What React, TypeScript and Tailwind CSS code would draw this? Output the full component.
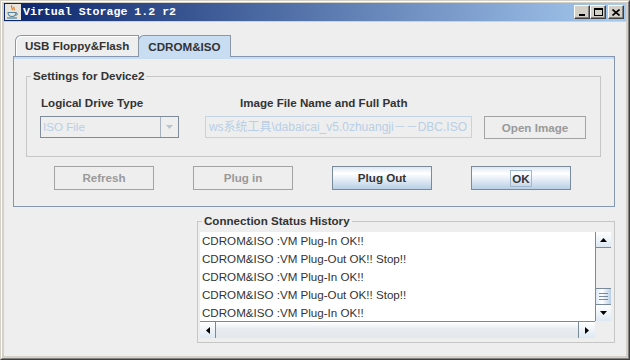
import React from 'react';

type Dir = 'up' | 'down' | 'left' | 'right';

const Arrow = ({ dir, color = '#000000' }: { dir: Dir; color?: string }) => {
  const vertical = dir === 'up' || dir === 'down';
  const w = vertical ? 7 : 4;
  const h = vertical ? 4 : 7;
  const pts = {
    up: '0,4 3.5,0 7,4',
    down: '0,0 7,0 3.5,4',
    left: '4,0 4,7 0,3.5',
    right: '0,0 0,7 4,3.5',
  }[dir];
  return (
    <svg width={w} height={h} viewBox={`0 0 ${w} ${h}`}>
      <polygon points={pts} fill={color} />
    </svg>
  );
};

const CaptionButton = ({ children }: { children: React.ReactNode }) => (
  <div className="w-[16px] h-[14px] bg-[#d4d0c8] border border-t-white border-l-white border-r-[#404040] border-b-[#404040] shadow-[inset_-1px_-1px_#808080] flex items-center justify-center">
    {children}
  </div>
);

const JavaIcon = () => (
  <svg width="16" height="16" viewBox="0 0 16 16">
    <rect x="0" y="0" width="16" height="16" fill="#e8e4dc" />
    <path d="M7 1.5c-2 1.6 1.6 2.6 0 4.6M9.2 3c-1.4 1.2 1 1.8-0.2 3.4" stroke="#e76f00" strokeWidth="1.1" fill="none" />
    <path d="M3 8.5h8c0 2.6-1.6 4-4 4s-4-1.4-4-4z" fill="none" stroke="#5382a1" strokeWidth="1.1" />
    <path d="M11 9.2c1.8-0.4 2 1.6 0 2.2" stroke="#5382a1" strokeWidth="1" fill="none" />
    <path d="M2 14h10" stroke="#5382a1" strokeWidth="1.2" />
  </svg>
);

const Button = ({ label, disabled, focused }: { label: string; disabled?: boolean; focused?: boolean }) => (
  <div
    className={
      disabled
        ? 'w-[100px] h-[24px] border border-[#a3a3a3] bg-[#eeeeee] flex items-center justify-center font-bold text-[#999999]'
        : 'w-[100px] h-[24px] border border-[#7a8a99] bg-[linear-gradient(to_bottom,#dde8f3_0%,#ffffff_30%,#b8cfe5_100%)] flex items-center justify-center font-bold text-[#333333]'
    }
  >
    <span className={focused ? 'border border-[#a3b8cc] px-[1px] leading-[15px]' : ''}>{label}</span>
  </div>
);

const VScrollBar = () => (
  <div className="w-[16px] h-full flex flex-col bg-[#eeeeee] border-l border-[#7a8a99]">
    <div className="h-[16px] border-b border-[#7a8a99] bg-[linear-gradient(to_bottom,#ffffff,#dde8f3)] flex items-center justify-center">
      <Arrow dir="up" />
    </div>
    <div className="flex-1 bg-[#eeeeee]" />
    <div className="h-[17px] border-y border-[#7a8a99] bg-[linear-gradient(to_right,#dde8f3,#ffffff_40%,#b8cfe5)] flex flex-col items-center justify-center gap-[2px]">
      <div className="w-[9px] h-px bg-[#7a8a99]" />
      <div className="w-[9px] h-px bg-[#7a8a99]" />
      <div className="w-[9px] h-px bg-[#7a8a99]" />
    </div>
    <div className="h-[16px] bg-[linear-gradient(to_bottom,#ffffff,#dde8f3)] flex items-center justify-center">
      <Arrow dir="down" />
    </div>
  </div>
);

const HScrollBar = () => (
  <div className="flex-1 h-full flex bg-[#eeeeee] border-t border-[#7a8a99]">
    <div className="w-[16px] border-r border-[#7a8a99] bg-[linear-gradient(to_bottom,#ffffff,#dde8f3)] flex items-center justify-center">
      <Arrow dir="left" />
    </div>
    <div className="flex-1 border-r border-[#7a8a99] bg-[linear-gradient(to_bottom,#ffffff,#e9edf2_40%,#e4e8ec)]" />
    <div className="w-[16px] bg-[linear-gradient(to_bottom,#ffffff,#dde8f3)] flex items-center justify-center">
      <Arrow dir="right" />
    </div>
  </div>
);

const history = [
  'CDROM&ISO :VM Plug-In OK!!',
  'CDROM&ISO :VM Plug-Out OK!! Stop!!',
  'CDROM&ISO :VM Plug-In OK!!',
  'CDROM&ISO :VM Plug-Out OK!! Stop!!',
  'CDROM&ISO :VM Plug-In OK!!',
];

export default function App() {
  return (
    <div className="w-[630px] h-[360px] overflow-hidden bg-[#d4d0c8] border border-[#d4d0c8] border-r-[#404040] border-b-[#404040] font-['Liberation_Sans','Noto_Sans_CJK_SC',Arial,sans-serif] text-[11.6px] text-[#333333]">
      <div className="h-full flex flex-col border border-white border-r-[#808080] border-b-[#808080] px-[2px] pt-[1px] pb-[2px]">
        {/* title bar */}
        <div className="h-[18px] flex items-center bg-[linear-gradient(to_right,#0a246a,#a6caf0)]">
          <div className="ml-[1px]">
            <JavaIcon />
          </div>
          <span className="ml-[2px] font-['Liberation_Mono',monospace] font-bold text-[11.6px] text-white">
            Virtual Storage 1.2 r2
          </span>
          <div className="ml-auto flex items-center">
            <CaptionButton>
              <div className="w-[6px] h-[2px] bg-black mt-[6px] -ml-[1px]" />
            </CaptionButton>
            <CaptionButton>
              <div className="w-[9px] h-[8px] border border-black border-t-2" />
            </CaptionButton>
            <div className="ml-[2px] mr-[2px]">
              <CaptionButton>
                <svg width="8" height="7" viewBox="0 0 8 7">
                  <path d="M0.5 0.5l7 6M7.5 0.5l-7 6" stroke="#000" strokeWidth="1.6" />
                </svg>
              </CaptionButton>
            </div>
          </div>
        </div>

        {/* window content */}
        <div className="mt-[1px] flex-1 bg-[#eeeeee] pt-[13px] flex flex-col">
          {/* tabs */}
          <div className="ml-[11px] h-[21px] flex items-end">
            <div className="h-[21px] px-[9px] flex items-center font-bold bg-[#eeeeee] border border-b-0 border-[#8b97a4] rounded-tl-[6px] shadow-[inset_1px_1px_#ffffff]">
              USB Floppy&amp;Flash
            </div>
            <div className="relative z-10 -mb-px -ml-px h-[22px] px-[9px] flex items-center font-bold bg-[#c8ddf2] border border-b-0 border-[#8b97a4] rounded-tl-[6px]">
              CDROM&amp;ISO
            </div>
          </div>

          {/* tab panel */}
          <div className="ml-[9px] w-[602px] border border-[#8597b0] flex flex-col">
            <div className="h-[2px] bg-[#c8ddf2]" />
            <fieldset className="mt-[10px] ml-[12px] w-[575px] border border-[#c6c6c6] pb-[17px]">
              <legend className="ml-[4px] px-[2px] font-bold leading-[14px]">Settings for Device2</legend>
              <div className="mt-[13px] pl-[14px] flex font-bold leading-[14px]">
                <span className="w-[199px]">Logical Drive Type</span>
                <span>Image File Name and Full Path</span>
              </div>
              <div className="mt-[6px] pl-[13px] flex items-start">
                <div className="w-[139px] h-[22px] border border-[#7f8b98] bg-[#eeeeee] flex">
                  <div className="flex-1 flex items-center pl-[2px] text-[#b8cfe5]">ISO File</div>
                  <div className="w-[18px] border-l border-[#a8b4c0] flex items-center justify-center">
                    <Arrow dir="down" color="#b8c4d0" />
                  </div>
                </div>
                <div className="ml-[26px] w-[267px] h-[22px] border border-[#c4d4e4] bg-[#eeeeee] flex items-center justify-end overflow-hidden whitespace-nowrap pr-[4px] text-[12px] text-[#b8cfe5]">
                  ws系统工具\dabaicai_v5.0zhuangji－－DBC.ISO
                </div>
                <div className="ml-[12px] w-[102px] h-[23px] border border-[#a3a3a3] bg-[#eeeeee] flex items-center justify-center font-bold text-[#999999]">
                  Open Image
                </div>
              </div>
            </fieldset>
            <div className="mt-[9px] mb-[16px] ml-[40px] flex gap-[39px]">
              <Button label="Refresh" disabled />
              <Button label="Plug in" disabled />
              <Button label="Plug Out" />
              <Button label="OK" focused />
            </div>
          </div>

          {/* connection status history */}
          <fieldset className="mt-[7px] ml-[193px] w-[418px] border border-[#c6c6c6] pb-[4px]">
            <legend className="ml-[4px] px-[2px] font-bold leading-[14px]">Connection Status History</legend>
            <div className="mt-[4px] ml-[2px] w-[411px] h-[106px] flex flex-col">
              <div className="h-[89px] flex">
                <div className="flex-1 bg-white pl-[2px] overflow-hidden">
                  {history.map((line, i) => (
                    <div key={i} className="leading-[18px] whitespace-nowrap text-[#333333]">
                      {line}
                    </div>
                  ))}
                </div>
                <VScrollBar />
              </div>
              <div className="h-[17px] flex">
                <HScrollBar />
                <div className="w-[16px] h-full bg-[#eeeeee]" />
              </div>
            </div>
          </fieldset>
        </div>
      </div>
    </div>
  );
}
